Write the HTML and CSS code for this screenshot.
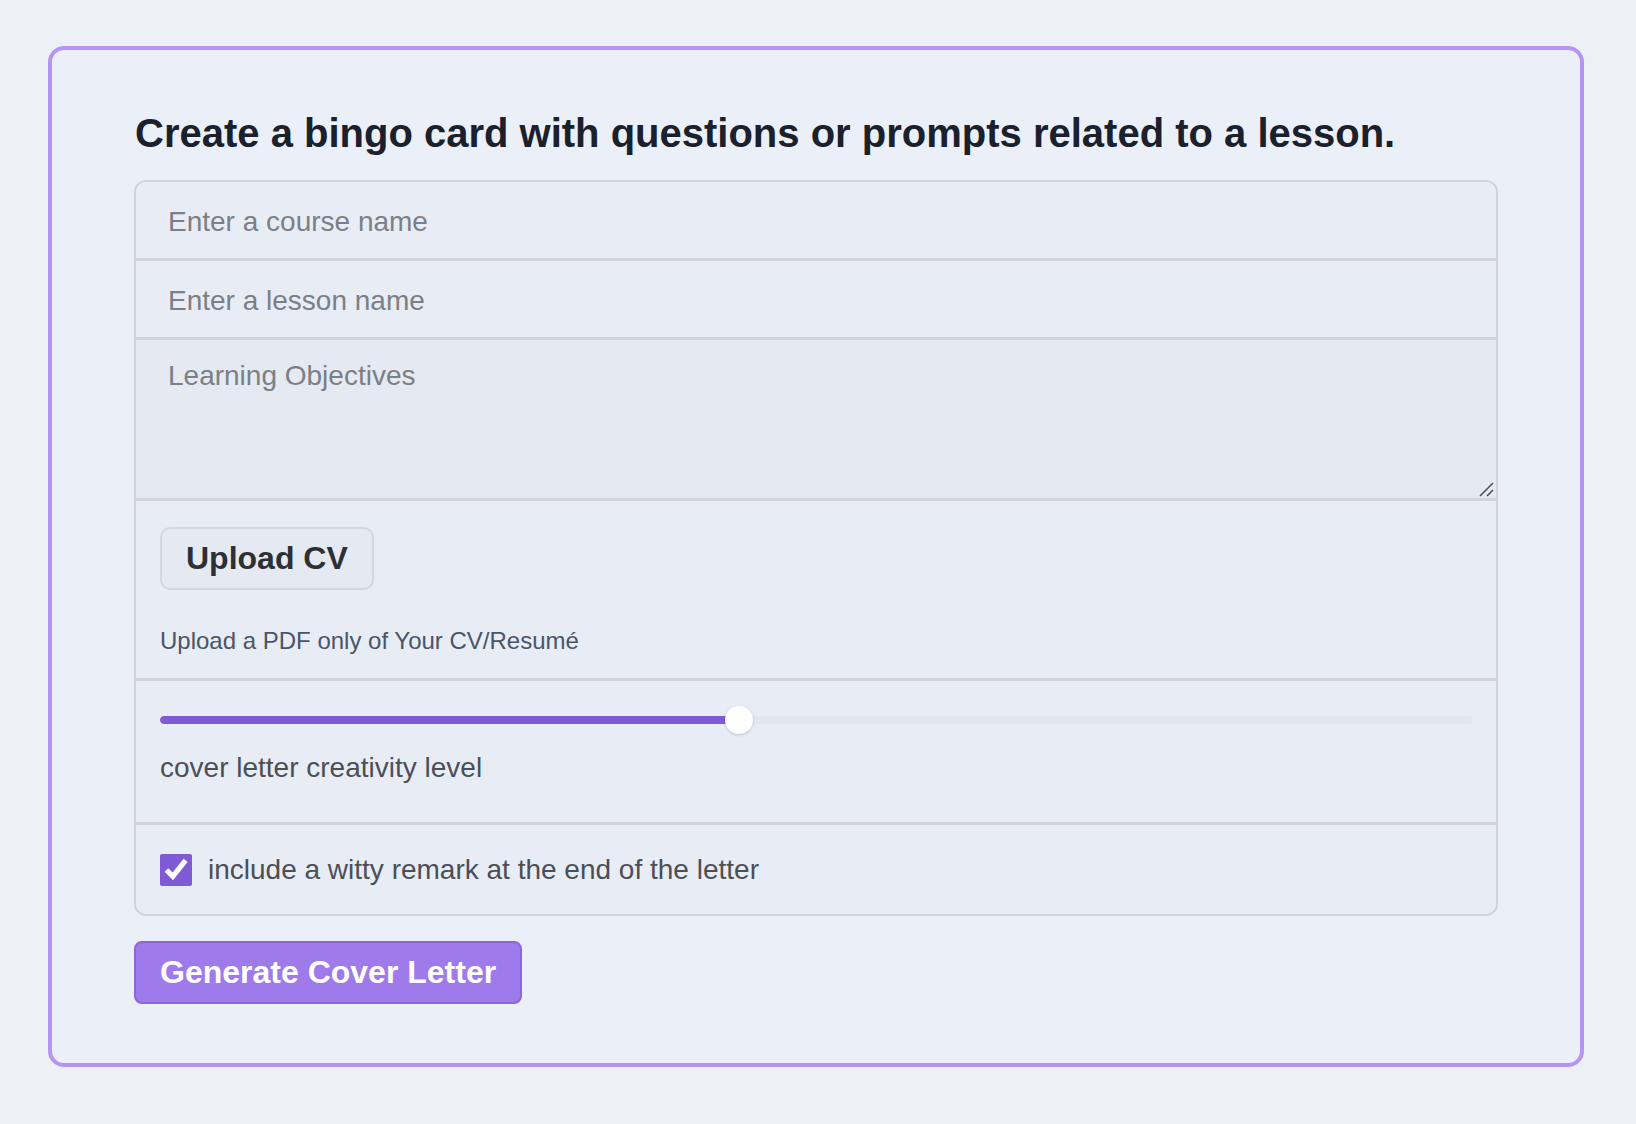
FILE: index.html
```html
<!DOCTYPE html>
<html lang="en">
<head>
<meta charset="utf-8">
<title>Cover Letter Generator</title>
<link rel="stylesheet" href="styles.css">
</head>
<body>
<main class="card">
  <h1 class="title">Create a bingo card with questions or prompts related to a lesson.</h1>
  <div class="fields">
    <input class="field" type="text" placeholder="Enter a course name">
    <input class="field" type="text" placeholder="Enter a lesson name">
    <div class="area-wrap">
      <textarea class="field field-area" placeholder="Learning Objectives"></textarea>
      <svg class="grip" width="16" height="16" viewBox="0 0 16 16" aria-hidden="true">
        <path d="M2 15 L15 2 M9 15 L15 9" stroke="#4a4d52" stroke-width="1.5" fill="none"/>
      </svg>
    </div>
    <div class="section upload">
      <button class="upload-btn" type="button">Upload CV</button>
      <p class="hint">Upload a PDF only of Your CV/Resumé</p>
    </div>
    <div class="section slider-sec">
      <div class="slider">
        <div class="track"><div class="fill" style="width:44.13%"></div></div>
        <div class="thumb" style="left:44.13%"></div>
      </div>
      <p class="slider-label">cover letter creativity level</p>
    </div>
    <label class="section check-sec">
      <input class="check" type="checkbox" checked>
      <span>include a witty remark at the end of the letter</span>
    </label>
  </div>
  <button class="generate" type="button">Generate Cover Letter</button>
</main>
</body>
</html>
```
FILE: styles.css
```css
body {
  margin: 0;
  padding: 46px 52px 0 48px;
  background: #edf1f5;
  font-family: "Liberation Sans", Arial, sans-serif;
}

.card {
  width: 1536px;
  box-sizing: border-box;
  border: 4px solid #b794f4;
  border-radius: 16px;
  background: #ebeff8;
  padding: 59px 82px;
}

.title {
  margin: 0 0 23px 1px;
  font-size: 40px;
  line-height: 48px;
  font-weight: 700;
  color: #1a202c;
}

.fields {
  display: flex;
  flex-direction: column;
  border: 2px solid #d1d5db;
  border-radius: 12px;
  overflow: hidden;
  background: #e8ecf5;
}

.field {
  display: block;
  width: 100%;
  box-sizing: border-box;
  margin: 0;
  border: 0;
  border-bottom: 3px solid #d1d5db;
  background: #e8ecf5;
  font-family: "Liberation Sans", Arial, sans-serif;
  font-size: 28px;
  line-height: 32px;
  padding: 24px 32px 20px;
  color: #1a202c;
  outline: none;
}

.field::placeholder {
  color: #7b7f86;
}

.area-wrap {
  position: relative;
  border-bottom: 3px solid #d1d5db;
}

.field-area {
  height: 158px;
  padding-top: 20px;
  border-bottom: 0;
  background: #e5e9f1;
  resize: none;
}

.grip {
  position: absolute;
  right: 2px;
  bottom: 1px;
}

.section {
  border-bottom: 3px solid #d1d5db;
  padding: 0 24px;
}

.upload {
  padding-top: 26px;
  padding-bottom: 24px;
}

.upload-btn {
  display: block;
  margin: 0;
  padding: 11px 24px;
  border: 2px solid #d3d8e0;
  border-radius: 10px;
  background: #e5e9f1;
  font-family: "Liberation Sans", Arial, sans-serif;
  font-size: 32px;
  line-height: 37px;
  font-weight: 700;
  color: #2d3035;
}

.hint {
  margin: 37px 0 0;
  font-size: 24px;
  line-height: 28px;
  color: #4a5568;
}

.upload .hint {
  margin-bottom: -1px;
}

.slider-sec {
  padding-top: 25px;
  padding-bottom: 38px;
}

.slider {
  position: relative;
  height: 28px;
  display: flex;
  align-items: center;
}

.track {
  width: 100%;
  height: 8px;
  border-radius: 4px;
  background: #e2e7ef;
  overflow: hidden;
}

.fill {
  height: 100%;
  background: #805ad5;
  border-radius: 4px;
}

.thumb {
  position: absolute;
  top: 0;
  width: 28px;
  height: 28px;
  margin-left: -14px;
  border-radius: 50%;
  background: #ffffff;
  box-shadow: 0 1px 3px rgba(0, 0, 0, 0.18);
}

.slider-label {
  margin: 18px 0 0;
  font-size: 28px;
  line-height: 32px;
  color: #4b4f56;
}

.check-sec {
  display: flex;
  align-items: center;
  gap: 16px;
  padding-top: 29px;
  padding-bottom: 28px;
  border-bottom: 0;
  font-size: 28px;
  line-height: 32px;
  color: #4b4f56;
}

.check {
  width: 32px;
  height: 32px;
  margin: 0;
  accent-color: #805ad5;
}

.generate {
  display: block;
  margin: 25px 0 0;
  padding: 10px 24px;
  border: 2px solid #8c66da;
  border-radius: 8px;
  background: #9f7aea;
  font-family: "Liberation Sans", Arial, sans-serif;
  font-size: 32px;
  line-height: 39px;
  font-weight: 700;
  color: #ffffff;
}
```
